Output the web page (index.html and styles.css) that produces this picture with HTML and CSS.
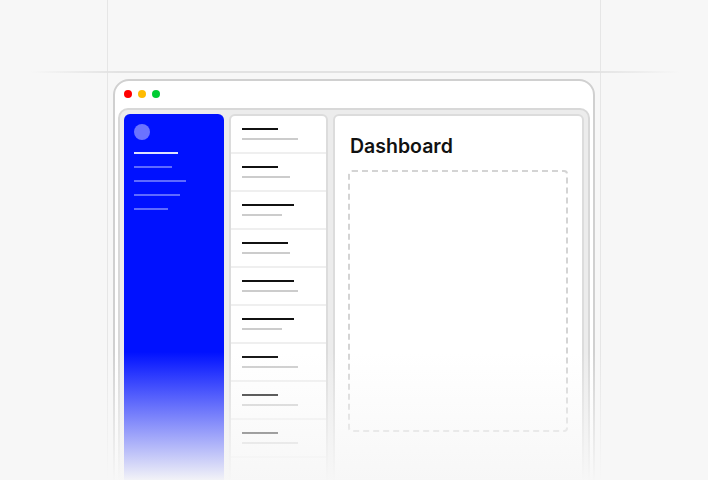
FILE: index.html
```html
<!DOCTYPE html>
<html lang="en">
<head>
<meta charset="utf-8">
<title>Dashboard</title>
<link rel="stylesheet" href="styles.css">
</head>
<body>
<div class="stage">
  <div class="window">
    <div class="titlebar">
      <span class="dot dot-red"></span>
      <span class="dot dot-yellow"></span>
      <span class="dot dot-green"></span>
    </div>
    <div class="frame">
      <aside class="sidebar">
        <div class="avatar"></div>
        <div class="nav">
          <span class="nav-line nav-active w44"></span>
          <span class="nav-line w38"></span>
          <span class="nav-line w52"></span>
          <span class="nav-line w46"></span>
          <span class="nav-line w34"></span>
        </div>
      </aside>
      <div class="list">
        <div class="item"><span class="title w36"></span><span class="sub w56"></span></div>
        <div class="item"><span class="title w36"></span><span class="sub w48"></span></div>
        <div class="item"><span class="title w52"></span><span class="sub w40"></span></div>
        <div class="item"><span class="title w46"></span><span class="sub w48"></span></div>
        <div class="item"><span class="title w52"></span><span class="sub w56"></span></div>
        <div class="item"><span class="title w52"></span><span class="sub w40"></span></div>
        <div class="item"><span class="title w36"></span><span class="sub w56"></span></div>
        <div class="item"><span class="title w36"></span><span class="sub w56"></span></div>
        <div class="item"><span class="title w36"></span><span class="sub w56"></span></div>
      </div>
      <main class="panel">
        <h1 class="heading">Dashboard</h1>
        <div class="placeholder"></div>
      </main>
    </div>
  </div>
  <div class="fade"></div>
</div>
</body>
</html>
```
FILE: styles.css
```css
* { box-sizing: border-box; }

html, body {
  margin: 0;
  padding: 0;
  background: #f7f7f7;
  overflow: hidden;
}

.stage {
  position: relative;
  width: 708px;
  height: 480px;
  overflow: hidden;
  padding-top: 79px;
  padding-left: 113px;
  background-color: #f7f7f7;
  background-image:
    linear-gradient(to right, rgba(224,224,224,0) 30px, #e2e2e2 120px, #e2e2e2 590px, rgba(224,224,224,0) 680px),
    linear-gradient(#e6e6e6, #e6e6e6),
    linear-gradient(#e6e6e6, #e6e6e6);
  background-size: 100% 2px, 1px 100%, 1px 100%;
  background-position: 0 71px, 107px 0, 600px 0;
  background-repeat: no-repeat;
  font-family: Inter, "Noto Sans", "Liberation Sans", sans-serif;
}

.window {
  width: 482px;
  height: 440px;
  background: #ffffff;
  border: 2px solid #d0d0d0;
  border-radius: 16px 16px 0 0;
  overflow: hidden;
}

.titlebar {
  display: flex;
  gap: 6px;
  height: 27px;
  padding: 9px 0 0 9px;
}

.dot {
  width: 8px;
  height: 8px;
  border-radius: 50%;
}
.dot-red { background: #ff0000; }
.dot-yellow { background: #ffbb00; }
.dot-green { background: #00cc33; }

.frame {
  display: flex;
  gap: 5px;
  margin: 0 3px;
  height: 420px;
  padding: 4px;
  background: #ececec;
  border: 2px solid #d8d8d8;
  border-radius: 10px 10px 0 0;
}

.sidebar {
  flex: 0 0 100px;
  background: #0011ff;
  border-radius: 6px 6px 0 0;
  padding: 10px;
}

.avatar {
  width: 16px;
  height: 16px;
  border-radius: 50%;
  background: #6b73ff;
}

.nav {
  display: flex;
  flex-direction: column;
  align-items: flex-start;
  gap: 12px;
  margin-top: 12px;
}

.nav-line {
  display: block;
  height: 2px;
  background: #5f6bff;
}
.nav-active { background: #dfe2ff; }

.list {
  flex: 0 0 99px;
  background: #ffffff;
  border: 2px solid #dcdcdc;
  border-radius: 6px 6px 0 0;
  overflow: hidden;
}

.item {
  display: flex;
  flex-direction: column;
  align-items: flex-start;
  gap: 8px;
  padding: 12px 11px;
  border-bottom: 2px solid #efefef;
}

.title {
  display: block;
  height: 2px;
  background: #111111;
}
.sub {
  display: block;
  height: 2px;
  background: #cccccc;
}

.w34 { width: 34px; }
.w36 { width: 36px; }
.w38 { width: 38px; }
.w40 { width: 40px; }
.w44 { width: 44px; }
.w46 { width: 46px; }
.w48 { width: 48px; }
.w52 { width: 52px; }
.w56 { width: 56px; }

.panel {
  flex: 1 1 auto;
  background: #ffffff;
  border: 2px solid #dcdcdc;
  border-radius: 6px 6px 0 0;
  padding: 18px 13px 0;
}

.heading {
  margin: 0;
  font-size: 19.5px;
  font-weight: 600;
  line-height: 24px;
  color: #111111;
  padding-left: 2px;
}

.placeholder {
  margin-top: 12px;
  width: 220px;
  height: 262px;
  border: 2px dashed #d4d4d4;
  border-radius: 4px;
}

.fade {
  position: absolute;
  left: 0;
  right: 0;
  bottom: 0;
  height: 128px;
  background: linear-gradient(rgba(247,247,247,0), rgba(247,247,247,0.98));
  pointer-events: none;
}
```
